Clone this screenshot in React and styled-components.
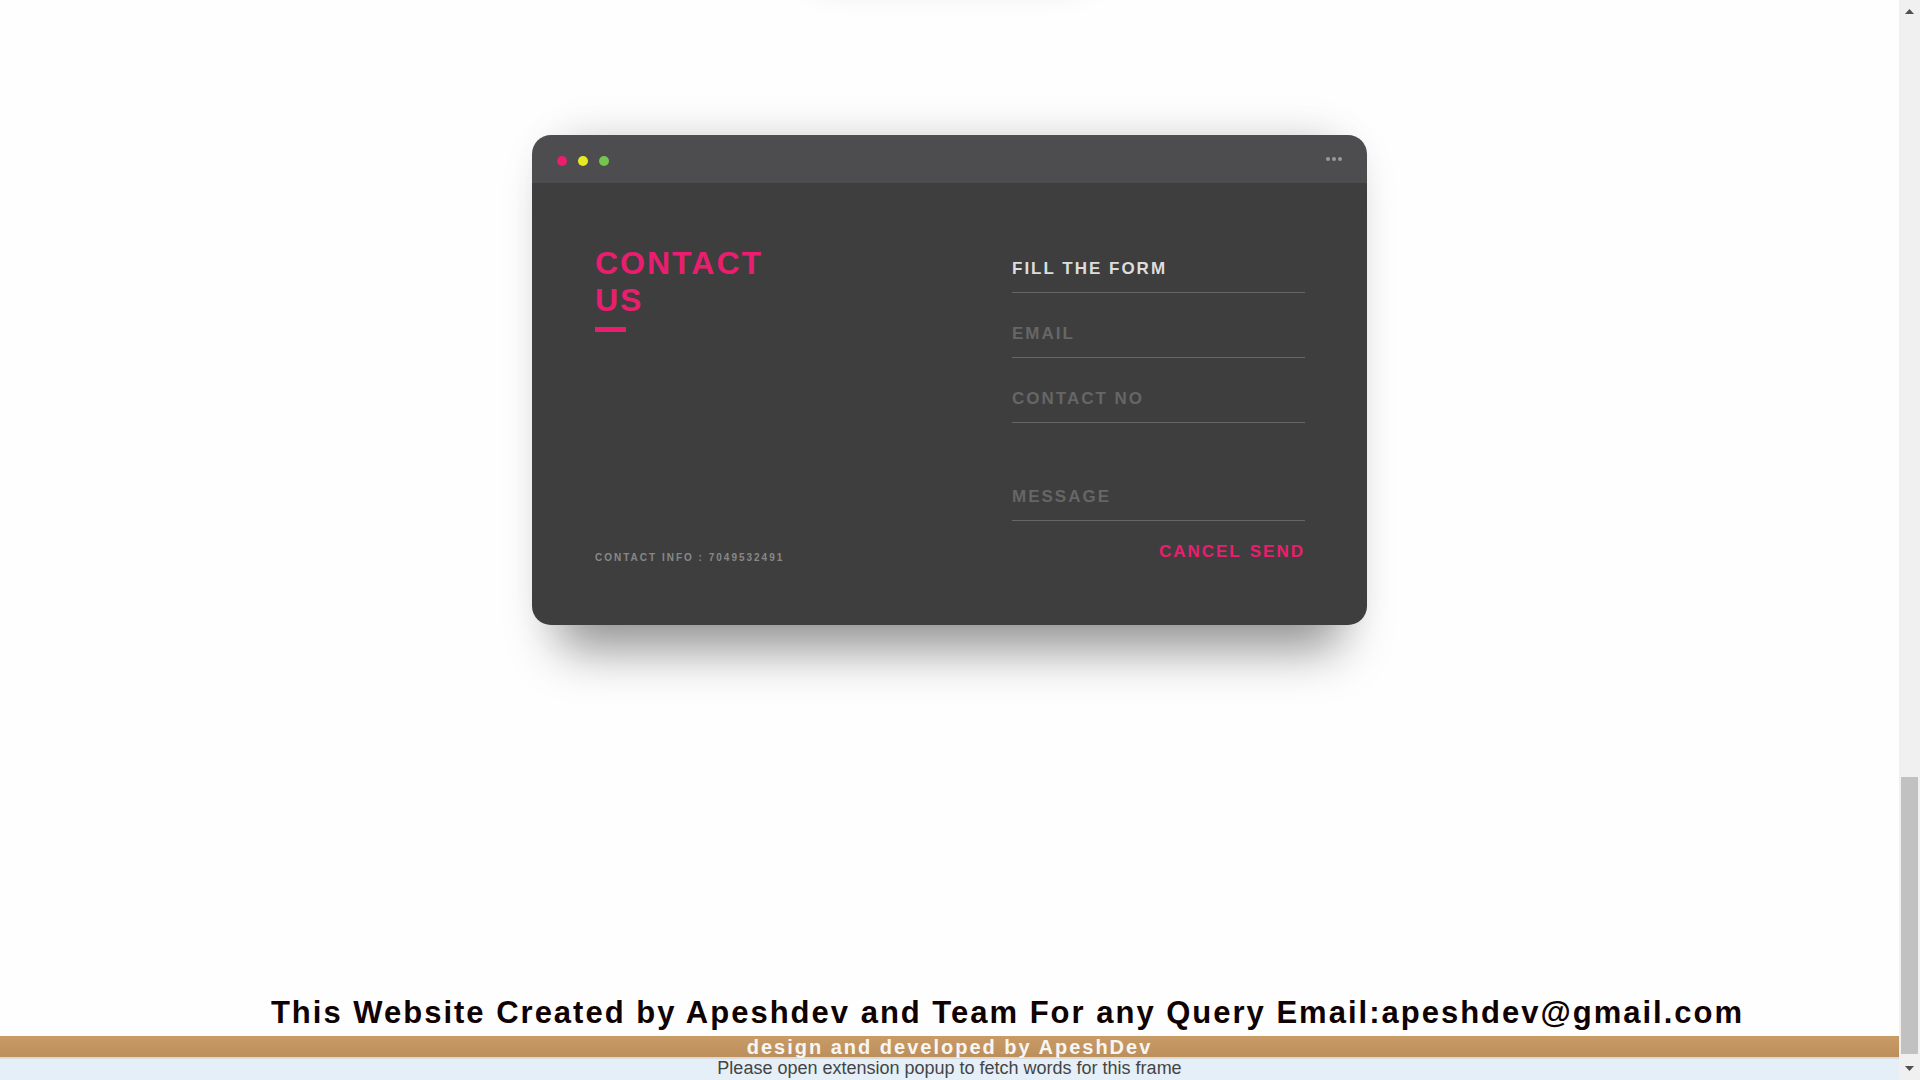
import React from "react";
import styled, { createGlobalStyle } from "styled-components";

const GlobalStyle = createGlobalStyle`
  *, *::before, *::after { box-sizing: border-box; }
  body {
    margin: 0;
    overflow: hidden;
    background: #fefefe;
    font-family: "Liberation Sans", Arial, sans-serif;
  }
`;

const Window = styled.div`
  display: flex;
  height: 100vh;
  overflow: hidden;
`;

const Page = styled.div`
  flex: 1;
  min-width: 0;
  display: flex;
  flex-direction: column;
`;

const PreviousPanel = styled.div`
  width: 270px;
  height: 40px;
  margin: -60px auto 0;
  flex: none;
  border-radius: 8px;
  box-shadow: 0 0 36px rgba(0, 0, 0, 0.2);
`;

const Main = styled.main`
  flex: 1;
  padding: 155px 20px 0;
`;

const Card = styled.section`
  position: relative;
  z-index: 0;
  max-width: 835px;
  margin: 0 auto;

  &::after {
    content: "";
    position: absolute;
    inset: 0 25px;
    z-index: -1;
    border-radius: 19px;
    box-shadow: 0 25px 50px rgba(0, 0, 0, 0.4), 0 0 50px rgba(0, 0, 0, 0.08);
  }
`;

const CardHeader = styled.header`
  display: flex;
  align-items: center;
  justify-content: space-between;
  height: 48px;
  padding: 0 25px;
  border-radius: 19px 19px 0 0;
  background: #4d4d4f;
`;

const Lights = styled.div`
  display: flex;
  gap: 11px;
  padding-top: 4px;
`;

const Light = styled.span`
  width: 10px;
  height: 10px;
  border-radius: 50%;
  background: ${(p) => p.$color};
`;

const MoreButton = styled.button`
  display: flex;
  gap: 2px;
  padding: 0;
  border: 0;
  background: none;
`;

const MoreDot = styled.span`
  width: 4px;
  height: 4px;
  border-radius: 50%;
  background: #999;
`;

const CardBody = styled.div`
  display: grid;
  grid-template-columns: 1fr 1fr;
  padding: 62px 62px 63px 63px;
  border-radius: 0 0 19px 19px;
  background: #3e3e3e;
`;

const Intro = styled.div`
  display: flex;
  flex-direction: column;
  justify-content: space-between;
`;

const Title = styled.h1`
  display: flex;
  flex-direction: column;
  margin: 0;
  color: #ea1d6f;
  font-size: 32px;
  line-height: 37px;
  letter-spacing: 2px;

  &::after {
    content: "";
    width: 31px;
    height: 5px;
    margin-top: 8px;
    background: #ea1d6f;
  }
`;

const ContactInfo = styled.p`
  margin: 0;
  color: #888;
  font-size: 10px;
  font-weight: 700;
  line-height: 8px;
  letter-spacing: 2px;
`;

const Form = styled.form`
  display: flex;
  flex-direction: column;
  gap: 17px;
  padding-left: 62px;
`;

const Field = styled.input`
  width: 100%;
  height: 48px;
  margin-top: ${(p) => (p.$spaced ? "33px" : "0")};
  padding: 13px 0;
  border: 0;
  border-bottom: 1px solid #666;
  border-radius: 0;
  outline: 0;
  background: none;
  color: #ddd;
  font: 700 17px/21px "Liberation Sans", Arial, sans-serif;
  letter-spacing: 2px;

  &::placeholder {
    color: #666;
    opacity: 1;
  }
`;

const Actions = styled.div`
  display: flex;
  justify-content: flex-end;
  gap: 8px;
  padding-top: 3px;
`;

const Action = styled.button`
  padding: 0;
  border: 0;
  background: none;
  color: #ea1d6f;
  font: 700 17px/21px "Liberation Sans", Arial, sans-serif;
  letter-spacing: 2px;
`;

const Credits = styled.h2`
  margin: 0;
  padding: 2px 0 0 116px;
  color: #100202;
  font-size: 31px;
  line-height: 46px;
  letter-spacing: 2px;
  text-align: center;
  white-space: nowrap;
`;

const DesignBar = styled.footer`
  position: relative;
  z-index: 1;
  height: 21px;
  background: linear-gradient(#c99b65, #bb8f5c);
  color: #f8f6f4;
  font-size: 20px;
  font-weight: 700;
  line-height: 23px;
  letter-spacing: 2px;
  text-align: center;
`;

const ExtensionBar = styled.div`
  height: 23px;
  border-top: 2px solid #d9dadb;
  background: #e5eff8;
  color: #444;
  font-size: 18px;
  line-height: 18px;
  text-align: center;
`;

const ScrollRail = styled.div`
  flex: none;
  display: flex;
  flex-direction: column;
  width: 21px;
  padding: 0 2px;
  background: #f0f0f0;
`;

const ScrollArrow = styled.svg`
  flex: none;
  display: block;
  width: 17px;
  height: 23px;
  fill: #505050;
`;

const ScrollSpace = styled.div`
  flex: ${(p) => p.$grow};
`;

const ScrollThumb = styled.div`
  flex: 277;
  background: #c1c1c1;
`;

export default function App() {
  return (
    <>
      <GlobalStyle />
      <Window>
        <Page>
          <PreviousPanel />
          <Main>
            <Card>
              <CardHeader>
                <Lights>
                  <Light $color="#ed1c6f" />
                  <Light $color="#e8e925" />
                  <Light $color="#74c54f" />
                </Lights>
                <MoreButton type="button" aria-label="More">
                  <MoreDot />
                  <MoreDot />
                  <MoreDot />
                </MoreButton>
              </CardHeader>
              <CardBody>
                <Intro>
                  <Title>
                    <span>CONTACT</span>
                    <span>US</span>
                  </Title>
                  <ContactInfo>CONTACT INFO : 7049532491</ContactInfo>
                </Intro>
                <Form onSubmit={(e) => e.preventDefault()}>
                  <Field aria-label="Name" defaultValue="FILL THE FORM" />
                  <Field aria-label="Email" placeholder="EMAIL" />
                  <Field aria-label="Contact number" placeholder="CONTACT NO" />
                  <Field $spaced aria-label="Message" placeholder="MESSAGE" />
                  <Actions>
                    <Action type="reset">CANCEL</Action>
                    <Action type="submit">SEND</Action>
                  </Actions>
                </Form>
              </CardBody>
            </Card>
          </Main>
          <Credits>
            This Website Created by Apeshdev and Team For any Query
            Email:apeshdev@gmail.com
          </Credits>
          <DesignBar>design and developed by ApeshDev</DesignBar>
          <ExtensionBar>
            Please open extension popup to fetch words for this frame
          </ExtensionBar>
        </Page>
        <ScrollRail aria-hidden="true">
          <ScrollArrow viewBox="0 0 17 23">
            <path d="M4 14 L8.5 9 L13 14 Z" />
          </ScrollArrow>
          <ScrollSpace $grow={754} />
          <ScrollThumb />
          <ScrollSpace $grow={3} />
          <ScrollArrow viewBox="0 0 17 23">
            <path d="M4 9 L8.5 14 L13 9 Z" />
          </ScrollArrow>
        </ScrollRail>
      </Window>
    </>
  );
}
